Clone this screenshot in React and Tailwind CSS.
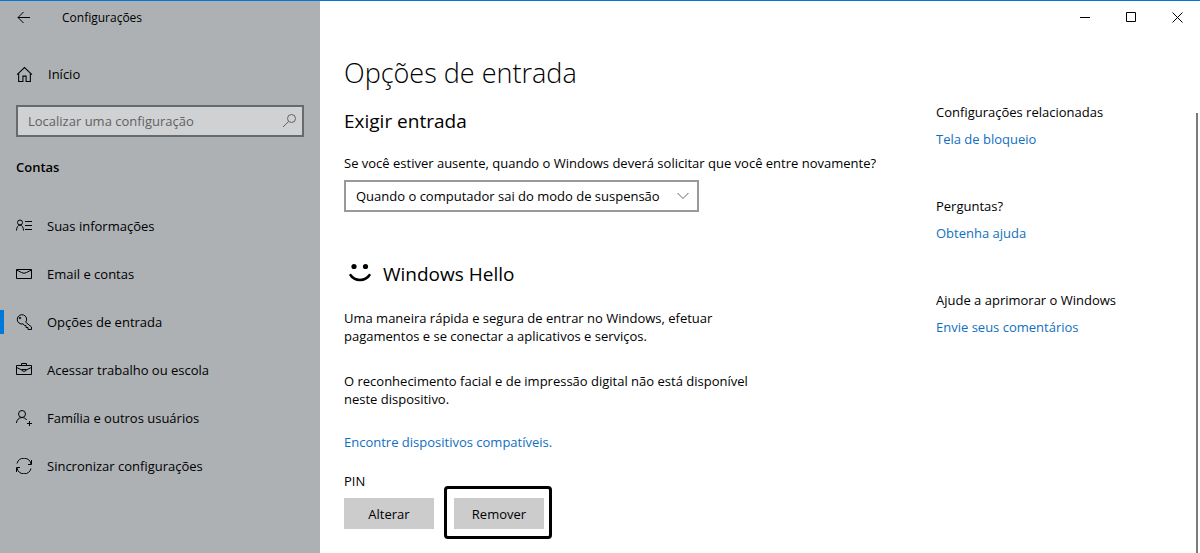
import React from "react";

const icons = {
  info: (
    <>
      <circle cx="4" cy="4.500" r="2.500" />
      <path d="M.5 12.500C.5 9.500 2 7 4 7S7.500 9.500 7.500 12.500M9 3.500h7M9 7.500h7M9 11.500h7" />
    </>
  ),
  mail: <path d="M.5 3.500h15v9H.5zM.5 4l5 2.500q2.500 1.500 5 0l5-2.500" />,
  key: (
    <>
      <path d="M9.700 8.200 15.500 13v2.500H12v-2h-2v-2H8.500l-1.300-1.600A4.700 4.700 0 1 1 9.700 8.200z" />
      <circle cx="4" cy="4" r=".8" />
    </>
  ),
  work: (
    <path d="M.5 3.500h15v9H.5zM5.500 3.500v-2h5v2M.5 5.500l5.500 2.500M10 8l5.500-2.500M6 7.500h4v1L8 9.500 6 8.500z" />
  ),
  family: (
    <>
      <circle cx="6" cy="4" r="3.500" />
      <path d="M.5 13C.5 9.800 3 7.500 6 7.500c2 0 3.700 1 4.700 2.500M13.500 11v5M11 13.500h5" />
    </>
  ),
  sync: (
    <path d="M1 5.500A7.200 7.200 0 0 1 15 6M15.500 2v4.500H12M15 10.500A7.200 7.200 0 0 1 1 10M.5 14V9.500H4" />
  ),
  home: <path d="M1 8.200 8 1.500l7 6.700M2.500 7v7.500h4v-5h3v5h4V7" />,
  back: <path d="M2 7.500h12M7.500 2 2 7.500 7.500 13" />,
  search: (
    <>
      <circle cx="9.500" cy="5.500" r="4" />
      <path d="M6.700 8.300 1 14" />
    </>
  ),
};

const Icon = ({ name, className = "" }) => (
  <svg
    viewBox="0 0 16 16"
    fill="none"
    stroke="currentColor"
    aria-hidden="true"
    className={`size-4 shrink-0 ${className}`}
  >
    {icons[name]}
  </svg>
);

const navItems = [
  { label: "Suas informações", icon: "info" },
  { label: "Email e contas", icon: "mail" },
  { label: "Opções de entrada", icon: "key", active: true },
  { label: "Acessar trabalho ou escola", icon: "work" },
  { label: "Família e outros usuários", icon: "family" },
  { label: "Sincronizar configurações", icon: "sync" },
];

const relatedLinks = [
  { title: "Configurações relacionadas", link: "Tela de bloqueio" },
  { title: "Perguntas?", link: "Obtenha ajuda" },
  { title: "Ajude a aprimorar o Windows", link: "Envie seus comentários" },
];

const Sidebar = () => (
  <aside className="w-80 shrink-0 bg-[#adb1b4]">
    <div className="flex h-[34px] items-center gap-[30px] pl-4">
      <button type="button" aria-label="Voltar">
        <Icon name="back" />
      </button>
      <span className="text-xs">Configurações</span>
    </div>
    <a href="#" className="mt-[15px] flex h-12 items-center gap-[15px] pl-4">
      <Icon name="home" className="size-[17px]" />
      Início
    </a>
    <div className="mx-4 mt-[7px] flex h-8 items-center border-2 border-[#68696b] bg-[#cfd1d3] pr-1 pl-2.5 text-[#5f6163]">
      <input
        type="text"
        aria-label="Localizar uma configuração"
        placeholder="Localizar uma configuração"
        className="h-5 min-w-0 flex-1 outline-none placeholder:text-[#5f6163]"
      />
      <Icon name="search" />
    </div>
    <h2 className="mt-5 pl-4 font-semibold">Contas</h2>
    <nav className="mt-[25px]">
      {navItems.map((item) => (
        <a key={item.label} href="#" className="flex h-12 items-center">
          <span className={`h-6 w-1 ${item.active ? "bg-[#0078d7]" : ""}`} />
          <Icon name={item.icon} className="mr-[15px] ml-3" />
          {item.label}
        </a>
      ))}
    </nav>
  </aside>
);

const WindowControls = () => (
  <div className="flex h-8 justify-end">
    <button type="button" aria-label="Minimizar" className="flex w-[46px] items-center justify-center">
      <svg viewBox="0 0 11 11" stroke="currentColor" className="size-[11px]">
        <path d="M0 5.500h10" />
      </svg>
    </button>
    <button type="button" aria-label="Maximizar" className="flex w-[46px] items-center justify-center">
      <svg viewBox="0 0 11 11" fill="none" stroke="currentColor" className="size-[11px]">
        <path d="M.5.5h9v9h-9z" />
      </svg>
    </button>
    <button type="button" aria-label="Fechar" className="flex w-[46px] items-center justify-center">
      <svg viewBox="0 0 11 11" stroke="currentColor" className="size-[11px]">
        <path d="m.5.5 10 10M10.500.5l-10 10" />
      </svg>
    </button>
  </div>
);

const SignInOptions = () => (
  <div className="w-[592px] shrink-0">
    <h1 className="text-[27px] leading-9 font-light">Opções de entrada</h1>
    <h2 className="mt-4 text-[19px] leading-7">Exigir entrada</h2>
    <label htmlFor="require" className="mt-[18px] block whitespace-nowrap">
      Se você estiver ausente, quando o Windows deverá solicitar que você entre novamente?
    </label>
    <div className="mt-[7px] grid w-[355px] items-center">
      <select
        id="require"
        className="col-start-1 row-start-1 h-8 appearance-none border-2 border-[#999] bg-white pl-2.5"
      >
        <option>Quando o computador sai do modo de suspensão</option>
      </select>
      <svg
        viewBox="0 0 12 8"
        fill="none"
        stroke="#666"
        className="pointer-events-none col-start-1 row-start-1 mr-2.5 h-2 w-3 justify-self-end"
      >
        <path d="m.5 1 5.500 5.500L11.500 1" />
      </svg>
    </div>

    <h2 className="mt-12 flex items-center gap-[11px] pl-1 text-[19px] leading-7">
      <svg viewBox="0 0 24 24" fill="none" stroke="currentColor" strokeWidth="2.500" strokeLinecap="round" className="size-6">
        <path d="M2.500 13c4 6.500 15 6.500 19 0" />
        <circle cx="6" cy="4.500" r="2.600" fill="currentColor" stroke="none" />
        <circle cx="17.500" cy="4.500" r="2.600" fill="currentColor" stroke="none" />
      </svg>
      Windows Hello
    </h2>
    <p className="mt-[21px] w-[420px] leading-[18px]">
      Uma maneira rápida e segura de entrar no Windows, efetuar pagamentos e se conectar a
      aplicativos e serviços.
    </p>
    <p className="mt-[27px] w-[420px] leading-[18px]">
      O reconhecimento facial e de impressão digital não está disponível neste dispositivo.
    </p>
    <a href="#" className="mt-6 block text-[#0f6fc0]">
      Encontre dispositivos compatíveis.
    </a>
    <h3 className="mt-[19px]">PIN</h3>
    <div className="-mt-[5px] flex items-start gap-2.5">
      <button type="button" className="mt-3 h-[31px] w-[90px] bg-[#ccc]">
        Alterar
      </button>
      <div className="rounded-sm border-3 border-black pt-[9px] pr-[5px] pb-[7px] pl-[7px]">
        <button type="button" className="block h-[31px] w-[90px] bg-[#ccc]">
          Remover
        </button>
      </div>
    </div>
  </div>
);

const App = () => {
  return (
    <div className="relative flex min-h-screen border-t border-[#0078d7] bg-white font-['Open_Sans','Noto_Sans',sans-serif] text-[13px] leading-5 text-black">
      <Sidebar />
      <main className="min-w-0 flex-1">
        <WindowControls />
        <div className="flex pt-[22px] pl-6">
          <SignInOptions />
          <div className="flex flex-col gap-[47px] pt-[47px]">
            {relatedLinks.map((item) => (
              <section key={item.title}>
                <h3>{item.title}</h3>
                <a href="#" className="mt-[7px] block text-[#0f6fc0]">
                  {item.link}
                </a>
              </section>
            ))}
          </div>
        </div>
      </main>
      <div className="absolute top-28 right-0.5 bottom-0 w-0.5 bg-[#7a7a7a]" />
    </div>
  );
};

export default App;
